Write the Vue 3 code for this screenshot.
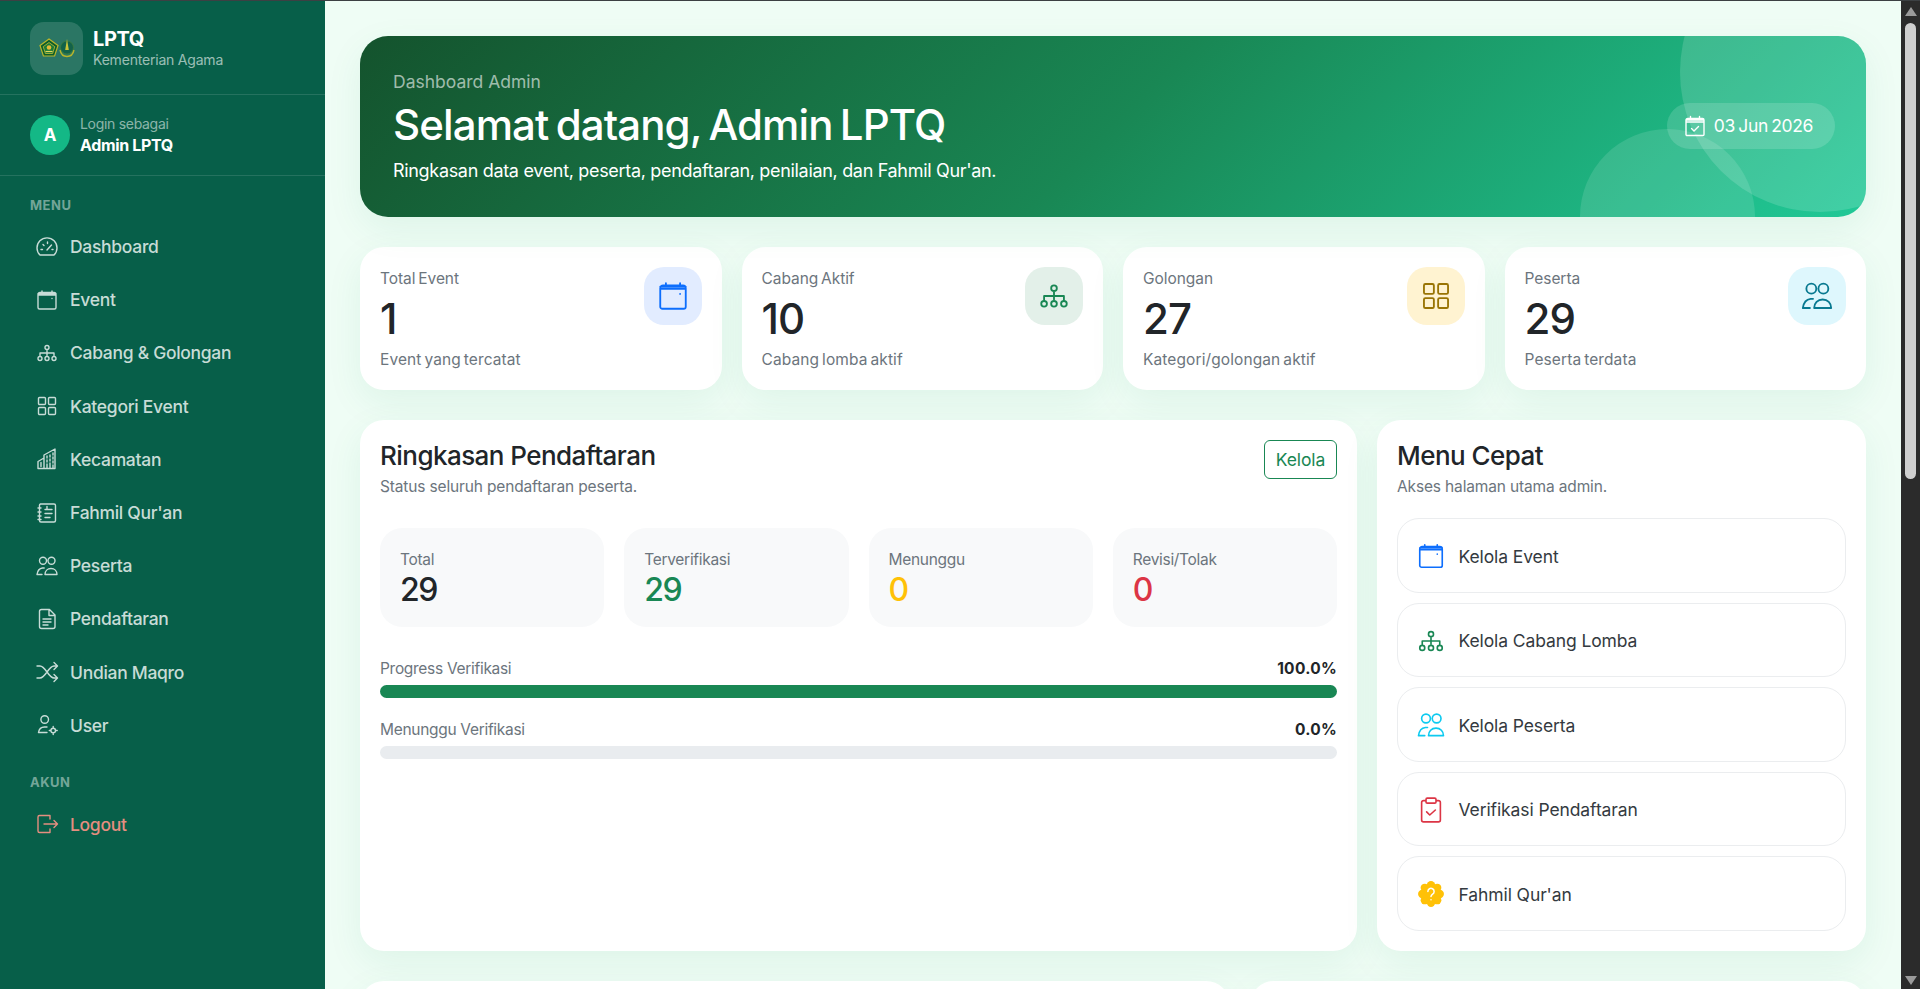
<template>
  <div class="shell">
    <aside class="sidebar">
      <div class="brand">
        <div class="logo-box">
          <svg class="logo" viewBox="0 0 36 20">
            <path d="M10 1l9 6.500-3.400 10.500H4.400L1 7.500z" fill="#0b5d2a" stroke="#b9b52a" stroke-width="1.200" />
            <path d="M10 4.500l5.800 4.200-2.200 6.800H6.400L4.200 8.700z" fill="#1d7a34" stroke="#d8c53a" stroke-width=".7" />
            <circle cx="10" cy="9.500" r="2.300" fill="#e2b93a" />
            <path d="M6.500 13.500h7" stroke="#e5d45a" stroke-width="1.200" />
            <circle cx="28" cy="9.500" r="6.500" fill="#12624a" stroke="#3f7d3a" stroke-width=".8" />
            <path d="M28 1l1.800 11h-3.600z" fill="#c9c43a" />
            <path d="M21 12c1 5 4 6.500 7 6.500s6-1.500 7-6.500" fill="none" stroke="#b9b52a" stroke-width="1.300" />
          </svg>
        </div>
        <div class="brand-text">
          <div class="brand-name">LPTQ</div>
          <div class="brand-sub">Kementerian Agama</div>
        </div>
      </div>

      <div class="user">
        <div class="avatar">A</div>
        <div class="user-text">
          <div class="user-role">Login sebagai</div>
          <div class="user-name">Admin LPTQ</div>
        </div>
      </div>

      <div class="nav-title">MENU</div>
      <a v-for="item in navItems" :key="item.label" class="nav-item">
        <svg class="icon nav-icon" viewBox="0 0 24 24"><path :d="icons[item.icon]" /></svg>
        <span>{{ item.label }}</span>
      </a>

      <div class="nav-title nav-title-akun">AKUN</div>
      <a class="nav-item nav-logout">
        <svg class="icon nav-icon" viewBox="0 0 24 24"><path :d="icons.logout" /></svg>
        <span>Logout</span>
      </a>
    </aside>

    <main class="main">
      <section class="hero">
        <div class="hero-text">
          <div class="hero-kicker">Dashboard Admin</div>
          <h1>Selamat datang, Admin LPTQ</h1>
          <p>Ringkasan data event, peserta, pendaftaran, penilaian, dan Fahmil Qur'an.</p>
        </div>
        <div class="date-pill">
          <svg class="icon" viewBox="0 0 24 24"><path :d="icons.calendarCheck" /></svg>
          <span>03 Jun 2026</span>
        </div>
      </section>

      <section class="stats">
        <div v-for="stat in stats" :key="stat.label" class="stat-card">
          <div class="stat-text">
            <div class="stat-label">{{ stat.label }}</div>
            <div class="stat-value">{{ stat.value }}</div>
            <div class="stat-sub">{{ stat.sub }}</div>
          </div>
          <div class="stat-icon" :class="stat.tone">
            <svg class="icon" viewBox="0 0 24 24"><path :d="icons[stat.icon]" /></svg>
          </div>
        </div>
      </section>

      <section class="row-main">
        <div class="panel">
          <div class="panel-head">
            <div>
              <h2>Ringkasan Pendaftaran</h2>
              <p class="panel-sub">Status seluruh pendaftaran peserta.</p>
            </div>
            <button class="btn-outline">Kelola</button>
          </div>

          <div class="tiles">
            <div v-for="tile in tiles" :key="tile.label" class="tile">
              <div class="tile-label">{{ tile.label }}</div>
              <div class="tile-value" :class="tile.tone">{{ tile.value }}</div>
            </div>
          </div>

          <div v-for="bar in bars" :key="bar.label" class="progress-row">
            <div class="progress-head">
              <span>{{ bar.label }}</span>
              <strong>{{ bar.value.toFixed(1) }}%</strong>
            </div>
            <div class="progress-track">
              <div class="progress-fill" :style="{ width: bar.value + '%' }"></div>
            </div>
          </div>
        </div>

        <div class="panel">
          <h2>Menu Cepat</h2>
          <p class="panel-sub">Akses halaman utama admin.</p>
          <div class="quick-list">
            <a v-for="item in quickLinks" :key="item.label" class="quick-item">
              <svg v-if="item.icon === 'question'" class="quick-icon" viewBox="-1 -1 26 26">
                <g fill="#ffc107">
                  <circle cx="12" cy="12" r="8.500" />
                  <circle v-for="(b, i) in scallops" :key="i" :cx="b.x" :cy="b.y" r="3.600" />
                </g>
                <path d="M9.300 9.800a2.700 2.700 0 1 1 4.100 2.300c-.9.600-1.400 1.100-1.400 2.100M12 17v.01" fill="none" stroke="#fff" stroke-width="2.200" stroke-linecap="round" />
              </svg>
              <svg v-else class="icon quick-icon" :class="item.tone" viewBox="0 0 24 24"><path :d="icons[item.icon]" /></svg>
              <span>{{ item.label }}</span>
            </a>
          </div>
        </div>
      </section>

      <section class="row-bottom">
        <div class="panel panel-cut"></div>
        <div class="panel panel-cut"></div>
      </section>
    </main>

    <div class="scroll-rail">
      <span class="arrow arrow-up"></span>
      <span class="thumb"></span>
      <span class="arrow arrow-down"></span>
    </div>
  </div>
</template>

<script setup>
const icons = {
  dashboard: "M5 20a10 10 0 1 1 14 0zM12 15l4.500-5M6 14.500h1.500M8 9.500l1 1M12.500 7v1.500M18 14.500h-1",
  calendar: "M3 6.500a2 2 0 0 1 2-2h14a2 2 0 0 1 2 2v13a1.500 1.500 0 0 1-1.500 1.500h-15A1.500 1.500 0 0 1 3 19.500zM3 5.500h18M3 7h18M7 3v2M17 3v2M17 10.500v.01",
  sitemap: "M12 8.500v6M5 15v-3h14v3M14 6.500a2 2 0 1 1-4 0 2 2 0 0 1 4 0zM7 17.500a2 2 0 1 1-4 0 2 2 0 0 1 4 0zM14 17.500a2 2 0 1 1-4 0 2 2 0 0 1 4 0zM21 17.500a2 2 0 1 1-4 0 2 2 0 0 1 4 0z",
  grid: "M3.500 4.500a1 1 0 0 1 1-1h5a1 1 0 0 1 1 1v5a1 1 0 0 1-1 1h-5a1 1 0 0 1-1-1zM13.500 4.500a1 1 0 0 1 1-1h5a1 1 0 0 1 1 1v5a1 1 0 0 1-1 1h-5a1 1 0 0 1-1-1zM3.500 14.500a1 1 0 0 1 1-1h5a1 1 0 0 1 1 1v5a1 1 0 0 1-1 1h-5a1 1 0 0 1-1-1zM13.500 14.500a1 1 0 0 1 1-1h5a1 1 0 0 1 1 1v5a1 1 0 0 1-1 1h-5a1 1 0 0 1-1-1z",
  building: "M3 21.500v-7l6-3.500v10.500zM9 21.500V8l11-6v19.500H9zM6 15.500v4M12 9v2M15 8v2M18 6v2M12 13v2M15 12v2M18 10v2M12 17v4M15 16v5.500M18 14v2M18 18v3.500",
  notebook: "M5.500 3H19a1.500 1.500 0 0 1 1.500 1.500v15A1.500 1.500 0 0 1 19 21H6a1.500 1.500 0 0 1-1.500-1.500v-15A1.500 1.500 0 0 1 5.500 3M3 7h3M3 11h3M3 15h3M3 18.500h3M10 8.500h2V5.500M13 8.500h4M10 12.500h7M10 16.500h5",
  users: "M11.500 6.800a3.500 3.500 0 1 1-7 0 3.500 3.500 0 0 1 7 0zM20 6.800a3.500 3.500 0 1 1-7 0 3.500 3.500 0 0 1 7 0zM10 20.500c0-3.500 2.500-6 6-6s6 2.500 6 6zM7.500 14c-3 .3-5 3-5.500 6.500h5M7.500 14h1.700",
  doc: "M6.500 2.500h8L20 8v11.500a2 2 0 0 1-2 2H6.500a2 2 0 0 1-2-2v-15a2 2 0 0 1 2-2zM14 3v5.500h6M8 12h8M8 15h8M8 18h5",
  shuffle: "M2 6h3c5.500 0 8.500 12 14 12h3M2 18h3c5.500 0 8.500-12 14-12h3M19 2.500L22.500 6 19 9.500M19 14.500l3.500 3.500-3.500 3.500",
  userGear: "M13.500 6.500a3.800 3.800 0 1 1-7.600 0 3.800 3.800 0 0 1 7.600 0zM12 14h-2.500c-3 0-5.500 2-6 5.500h8.500M20.500 17.500a2.300 2.300 0 1 1-4.600 0 2.300 2.300 0 0 1 4.600 0zM18.200 13.500v1.200M18.200 20.300v1.200M14.300 17.500h1.200M21 17.500h1.200",
  logout: "M15 7V3.500H4.500a1.500 1.500 0 0 0-1.500 1.500v14a1.500 1.500 0 0 0 1.500 1.500H15V17M9 12h13.500M19 8.500l3.500 3.500-3.500 3.500",
  calendarCheck: "M3 6a1.500 1.500 0 0 1 1.500-1.500h15A1.500 1.500 0 0 1 21 6v14.500a1 1 0 0 1-1 1H4a1 1 0 0 1-1-1zM3 6h18M3 8h18M7.500 2.500v2M16.500 2.500v2M8.500 14.500l2.500 2.500 4.500-4.500",
  clipboard: "M8 4.500H6A1.500 1.500 0 0 0 4.500 6v14A1.500 1.500 0 0 0 6 21.500h12a1.500 1.500 0 0 0 1.500-1.500V6A1.500 1.500 0 0 0 18 4.500h-2M9 2.500h6a1 1 0 0 1 1 1v2a1 1 0 0 1-1 1H9a1 1 0 0 1-1-1v-2a1 1 0 0 1 1-1zM8.500 13.500l2.500 2.500 4.500-4",
};

const navItems = [
  { label: "Dashboard", icon: "dashboard" },
  { label: "Event", icon: "calendar" },
  { label: "Cabang & Golongan", icon: "sitemap" },
  { label: "Kategori Event", icon: "grid" },
  { label: "Kecamatan", icon: "building" },
  { label: "Fahmil Qur'an", icon: "notebook" },
  { label: "Peserta", icon: "users" },
  { label: "Pendaftaran", icon: "doc" },
  { label: "Undian Maqro", icon: "shuffle" },
  { label: "User", icon: "userGear" },
];

const stats = [
  { label: "Total Event", value: 1, sub: "Event yang tercatat", icon: "calendar", tone: "tone-blue" },
  { label: "Cabang Aktif", value: 10, sub: "Cabang lomba aktif", icon: "sitemap", tone: "tone-green" },
  { label: "Golongan", value: 27, sub: "Kategori/golongan aktif", icon: "grid", tone: "tone-yellow" },
  { label: "Peserta", value: 29, sub: "Peserta terdata", icon: "users", tone: "tone-cyan" },
];

const tiles = [
  { label: "Total", value: 29, tone: "" },
  { label: "Terverifikasi", value: 29, tone: "text-green" },
  { label: "Menunggu", value: 0, tone: "text-yellow" },
  { label: "Revisi/Tolak", value: 0, tone: "text-red" },
];

const bars = [
  { label: "Progress Verifikasi", value: 100 },
  { label: "Menunggu Verifikasi", value: 0 },
];

const quickLinks = [
  { label: "Kelola Event", icon: "calendar", tone: "ic-blue" },
  { label: "Kelola Cabang Lomba", icon: "sitemap", tone: "ic-green" },
  { label: "Kelola Peserta", icon: "users", tone: "ic-cyan" },
  { label: "Verifikasi Pendaftaran", icon: "clipboard", tone: "ic-red" },
  { label: "Fahmil Qur'an", icon: "question", tone: "" },
];

// bumps round the yellow badge
const scallops = Array.from({ length: 8 }, (_, i) => ({
  x: 12 + 7.6 * Math.cos((i * Math.PI) / 4),
  y: 12 + 7.6 * Math.sin((i * Math.PI) / 4),
}));
</script>

<style>
html,
body {
  margin: 0;
  height: 100%;
  overflow: hidden;
}
</style>

<style scoped>
* {
  box-sizing: border-box;
}

.shell {
  display: flex;
  height: 100vh;
  overflow: hidden;
  border-top: 1px solid #3c4043;
  background: #effdf5;
  font-family: Inter, "Liberation Sans", sans-serif;
  color: #212529;
}

.sidebar {
  flex: 0 0 325px;
  background: #075f49;
  color: #fff;
}

.brand {
  display: flex;
  align-items: center;
  gap: 10px;
  height: 94px;
  padding: 0 30px;
  border-bottom: 1px solid rgba(255, 255, 255, 0.12);
}

.logo-box {
  display: flex;
  align-items: center;
  justify-content: center;
  width: 53px;
  height: 53px;
  margin-top: 1px;
  border-radius: 14px;
  background: rgba(255, 255, 255, 0.15);
}

.logo {
  width: 36px;
  height: 20px;
}

.brand-name {
  padding-top: 1px;
  font-size: 20px;
  font-weight: 700;
  line-height: 24px;
  letter-spacing: -0.4px;
}

.brand-sub {
  font-size: 14px;
  line-height: 18px;
  color: rgba(255, 255, 255, 0.6);
  letter-spacing: -0.2px;
}

.user {
  display: flex;
  align-items: center;
  gap: 10px;
  height: 81px;
  padding: 0 30px;
  border-bottom: 1px solid rgba(255, 255, 255, 0.12);
}

.avatar {
  display: flex;
  align-items: center;
  justify-content: center;
  width: 40px;
  height: 40px;
  border-radius: 50%;
  background: #14b886;
  font-size: 17px;
  font-weight: 700;
}

.user-text {
  margin-top: -1px;
}

.user-role {
  margin-bottom: 2px;
  font-size: 14px;
  line-height: 19px;
  color: rgba(255, 255, 255, 0.55);
  letter-spacing: -0.3px;
}

.user-name {
  font-size: 16px;
  line-height: 20px;
  font-weight: 700;
  letter-spacing: -0.35px;
}

.nav-title {
  padding: 21px 30px 7px;
  font-size: 13px;
  line-height: 16px;
  font-weight: 700;
  letter-spacing: 0.5px;
  color: rgba(255, 255, 255, 0.45);
}

.nav-title-akun {
  padding-top: 22px;
  padding-bottom: 8px;
}

.nav-item {
  display: flex;
  align-items: center;
  gap: 11px;
  height: 53.200px;
  padding-left: 35px;
  font-size: 17.500px;
  font-weight: 500;
  color: rgba(255, 255, 255, 0.78);
  letter-spacing: -0.3px;
}

.nav-icon {
  flex: none;
  width: 24px;
  height: 24px;
}

.nav-logout {
  color: #e58e80;
}

.icon path {
  fill: none;
  stroke: currentColor;
  stroke-width: 1.400;
  stroke-linecap: round;
  stroke-linejoin: round;
}

.main {
  flex: 1;
  min-width: 0;
  padding: 35px 35px 0;
  overflow: hidden;
}

.hero {
  position: relative;
  display: flex;
  align-items: center;
  justify-content: space-between;
  height: 181px;
  padding: 0 31px 0 33px;
  overflow: hidden;
  border-radius: 28px;
  background: linear-gradient(135deg, #14532d 0%, #198754 50%, #20c997 100%);
  color: #fff;
  box-shadow: 0 12px 36px rgba(25, 135, 84, 0.08);
}

/* the two pale circles behind the date */
.hero::before,
.hero::after {
  content: "";
  position: absolute;
  border-radius: 50%;
  background: rgba(255, 255, 255, 0.15);
}

.hero::before {
  left: 1320px;
  top: -104px;
  width: 280px;
  height: 280px;
}

.hero::after {
  left: 1220px;
  top: 93px;
  width: 175px;
  height: 175px;
  background: rgba(255, 255, 255, 0.12);
}

.hero-text,
.date-pill {
  position: relative;
  z-index: 1;
}

.hero-kicker {
  font-size: 17.500px;
  line-height: 24px;
  color: rgba(255, 255, 255, 0.6);
  letter-spacing: 0;
}

.hero h1 {
  margin: 4.600px 0 8.600px;
  font-size: 42px;
  line-height: 52px;
  font-weight: 500;
  letter-spacing: -0.9px;
  word-spacing: -3px;
}

.hero p {
  margin: 0;
  font-size: 18px;
  line-height: 24px;
  letter-spacing: -0.32px;
}

.date-pill {
  display: flex;
  align-items: center;
  gap: 6.500px;
  height: 46px;
  margin-top: -2px;
  padding: 0 22px 0 16.500px;
  border-radius: 23px;
  background: rgba(255, 255, 255, 0.15);
  font-size: 17.500px;
  letter-spacing: -0.4px;
  word-spacing: -1px;
}

.date-pill svg {
  width: 24px;
  height: 24px;
}

.stats {
  display: grid;
  grid-template-columns: repeat(4, 1fr);
  gap: 20px;
  margin-top: 30px;
}

.stat-card {
  display: flex;
  justify-content: space-between;
  height: 143px;
  padding: 20px;
  border-radius: 24px;
  background: #fff;
  box-shadow: 0 12px 36px rgba(25, 135, 84, 0.08);
}

.stat-label,
.stat-sub {
  font-size: 15.500px;
  line-height: 22px;
  color: #6c757d;
  letter-spacing: -0.05px;
  word-spacing: -1.500px;
}

.stat-label {
  margin-top: 1px;
}

.stat-sub {
  letter-spacing: 0.1px;
}

.stat-value {
  margin: 4px 0 5px;
  font-size: 42px;
  line-height: 50px;
  font-weight: 500;
  letter-spacing: -1px;
}

.stat-icon {
  display: flex;
  align-items: center;
  justify-content: center;
  width: 58px;
  height: 58px;
  border-radius: 20px;
}

.stat-icon svg {
  width: 34px;
  height: 34px;
}

.stat-icon path {
  stroke-width: 1.300;
}

.tone-blue {
  background: #e2ecff;
  color: #0d6efd;
}

.tone-green {
  background: #e3f0e9;
  color: #198754;
}

.tone-yellow {
  background: #fff3d1;
  color: #997404;
}

.tone-cyan {
  background: #def7fd;
  color: #087990;
}

.row-main {
  display: grid;
  grid-template-columns: 997fr 489fr;
  gap: 20px;
  margin-top: 30px;
  height: 531px;
}

.panel {
  padding: 20px;
  border-radius: 24px;
  background: #fff;
  box-shadow: 0 12px 36px rgba(25, 135, 84, 0.08);
}

.panel-head {
  display: flex;
  align-items: flex-start;
  justify-content: space-between;
}

.panel h2 {
  margin: 0;
  font-size: 26px;
  line-height: 32px;
  font-weight: 500;
  letter-spacing: -0.55px;
}

.panel-sub {
  margin: 5px 0 0;
  font-size: 15.500px;
  line-height: 20px;
  color: #6c757d;
  letter-spacing: -0.15px;
}

.btn-outline {
  width: 73px;
  height: 39px;
  padding: 0;
  border: 1px solid #198754;
  border-radius: 6px;
  background: #fff;
  color: #198754;
  font: inherit;
  font-size: 17.500px;
  letter-spacing: -0.1px;
}

.tiles {
  display: grid;
  grid-template-columns: repeat(4, 1fr);
  gap: 20px;
  margin-top: 31px;
}

.tile {
  height: 99px;
  padding: 20px;
  border-radius: 22px;
  background: #f8f9fa;
}

.tile-label {
  margin-top: 1px;
  font-size: 15.500px;
  line-height: 22px;
  color: #6c757d;
  letter-spacing: -0.3px;
}

.tile-value {
  font-size: 32px;
  line-height: 38px;
  font-weight: 500;
  letter-spacing: -1.500px;
}

.text-green {
  color: #198754;
}

.text-yellow {
  color: #ffc107;
}

.text-red {
  color: #dc3545;
}

.progress-row {
  margin-top: 31px;
}

.progress-row + .progress-row {
  margin-top: 21px;
}

.progress-head {
  display: flex;
  justify-content: space-between;
  font-size: 15.500px;
  line-height: 22px;
  color: #6c757d;
  letter-spacing: -0.3px;
}

.progress-head strong {
  color: #212529;
  font-weight: 700;
  letter-spacing: 0.3px;
}

.progress-track {
  height: 13px;
  margin-top: 5px;
  overflow: hidden;
  border-radius: 7px;
  background: #e9ecef;
}

.progress-fill {
  height: 100%;
  background: #198754;
}

.quick-list {
  display: flex;
  flex-direction: column;
  gap: 10px;
  margin-top: 21px;
}

.quick-item {
  display: flex;
  align-items: center;
  gap: 13px;
  height: 74.500px;
  padding: 2px 17.500px 0;
  border: 1px solid #ebedef;
  border-radius: 22px;
  font-size: 17.500px;
  color: #343a40;
  letter-spacing: -0.1px;
}

.quick-icon {
  flex: none;
  width: 30px;
  height: 30px;
}

.quick-icon path {
  stroke-width: 1.300;
}

.ic-blue {
  color: #0d6efd;
}

.ic-green {
  color: #198754;
}

.ic-cyan {
  color: #0dcaf0;
}

.ic-red {
  color: #dc3545;
}

.row-bottom {
  display: grid;
  grid-template-columns: 870fr 616fr;
  gap: 20px;
  margin-top: 30px;
}

.panel-cut {
  height: 300px;
}

.scroll-rail {
  display: flex;
  flex: 0 0 19px;
  flex-direction: column;
  align-items: center;
  padding-top: 6px;
  background: #2b2b2b;
}

.arrow {
  width: 0;
  height: 0;
  border-left: 6.500px solid transparent;
  border-right: 6.500px solid transparent;
}

.arrow-up {
  border-bottom: 9px solid #9a9a9a;
}

.arrow-down {
  margin-top: auto;
  margin-bottom: 4px;
  border-top: 9px solid #9a9a9a;
}

.thumb {
  width: 11px;
  height: 456px;
  margin-top: 7px;
  border-radius: 6px;
  background: #cfcfcf;
}
</style>
